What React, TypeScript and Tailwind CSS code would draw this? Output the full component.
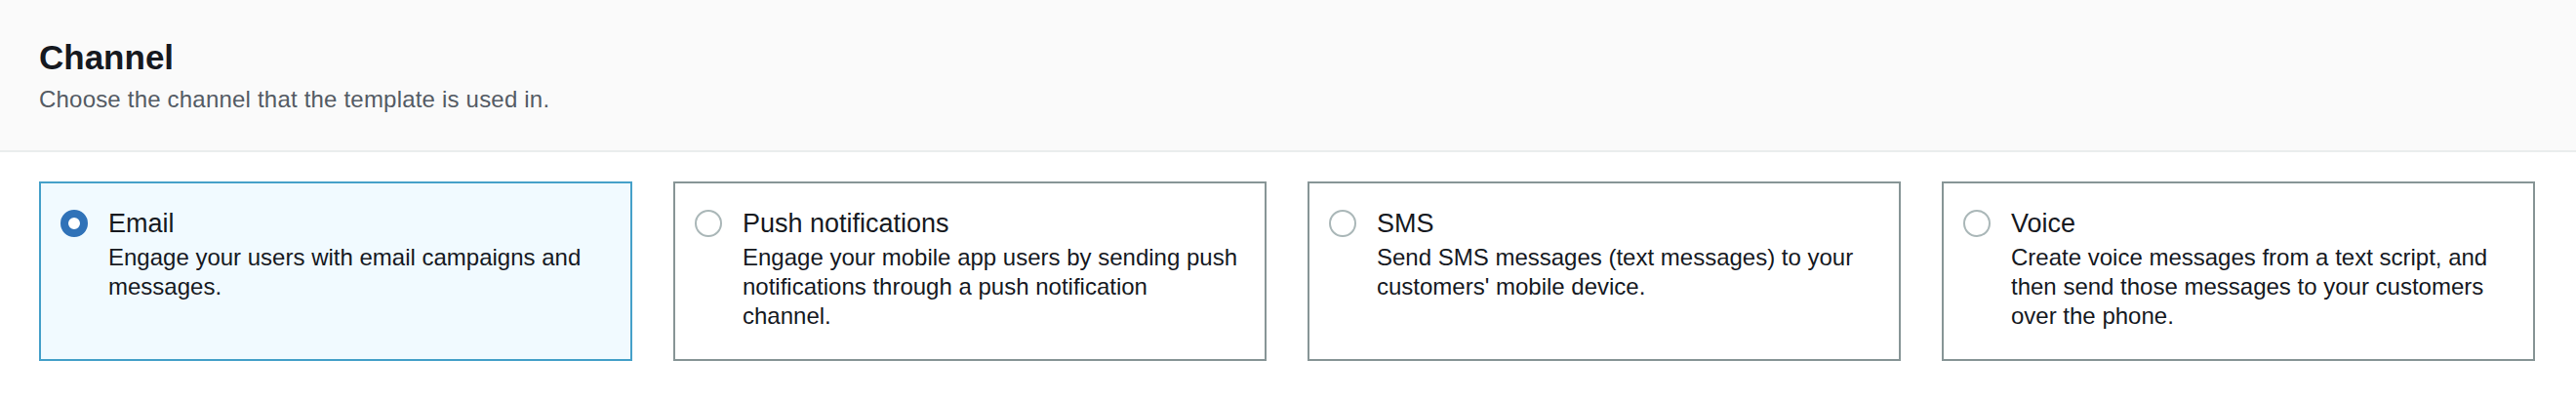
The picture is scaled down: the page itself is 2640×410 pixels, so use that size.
import { useState } from 'react'

const channels = [
  {
    id: 'email',
    label: 'Email',
    lines: ['Engage your users with email campaigns and', 'messages.'],
  },
  {
    id: 'push',
    label: 'Push notifications',
    lines: [
      'Engage your mobile app users by sending push',
      'notifications through a push notification',
      'channel.',
    ],
  },
  {
    id: 'sms',
    label: 'SMS',
    lines: ['Send SMS messages (text messages) to your', "customers' mobile device."],
  },
  {
    id: 'voice',
    label: 'Voice',
    lines: [
      'Create voice messages from a text script, and',
      'then send those messages to your customers',
      'over the phone.',
    ],
  },
]

export default function App() {
  const [selected, setSelected] = useState('email')

  return (
    <div className="w-[2640px] h-[410px] bg-white font-['Liberation_Sans',Arial,sans-serif]">
      <div className="bg-[#fafafa] border-b-2 border-[#eaeded] px-[40px] pt-[38px] pb-[37px]">
        <h2 className="text-[35px] leading-[42px] font-bold text-[#16191f]">Channel</h2>
        <p className="mt-[7px] text-[24px] leading-[30px] tracking-[0.2px] text-[#545b64]">
          Choose the channel that the template is used in.
        </p>
      </div>

      <div role="radiogroup" className="grid grid-cols-4 gap-[42px] pl-[40px] pr-[42px] pt-[30px]">
        {channels.map((channel) => {
          const checked = channel.id === selected
          return (
            <button
              key={channel.id}
              role="radio"
              aria-checked={checked}
              onClick={() => setSelected(channel.id)}
              className={
                checked
                  ? 'flex gap-[21px] text-left border-2 border-[#45a0c9] bg-[#f1faff] pl-[20px] pr-[20px] pt-[23px] pb-[29px]'
                  : 'flex gap-[21px] text-left border-2 border-[#879596] bg-white pl-[20px] pr-[20px] pt-[23px] pb-[29px]'
              }
            >
              <div className="h-[36px] flex items-center shrink-0">
                {checked ? (
                  <span className="w-[28px] h-[28px] rounded-full border-[8px] border-[#3072b8] bg-white" />
                ) : (
                  <span className="w-[28px] h-[28px] rounded-full border-2 border-[#aab7b8] bg-white" />
                )}
              </div>
              <div className="flex flex-col">
                <span className="text-[27px] leading-[36px] text-[#16191f]">{channel.label}</span>
                <span className="mt-[2px] text-[24px] leading-[30px] text-[#16191f]">
                  {channel.lines.map((line, i) => (
                    <span key={i} className="block whitespace-nowrap">
                      {line}
                    </span>
                  ))}
                </span>
              </div>
            </button>
          )
        })}
      </div>
    </div>
  )
}
